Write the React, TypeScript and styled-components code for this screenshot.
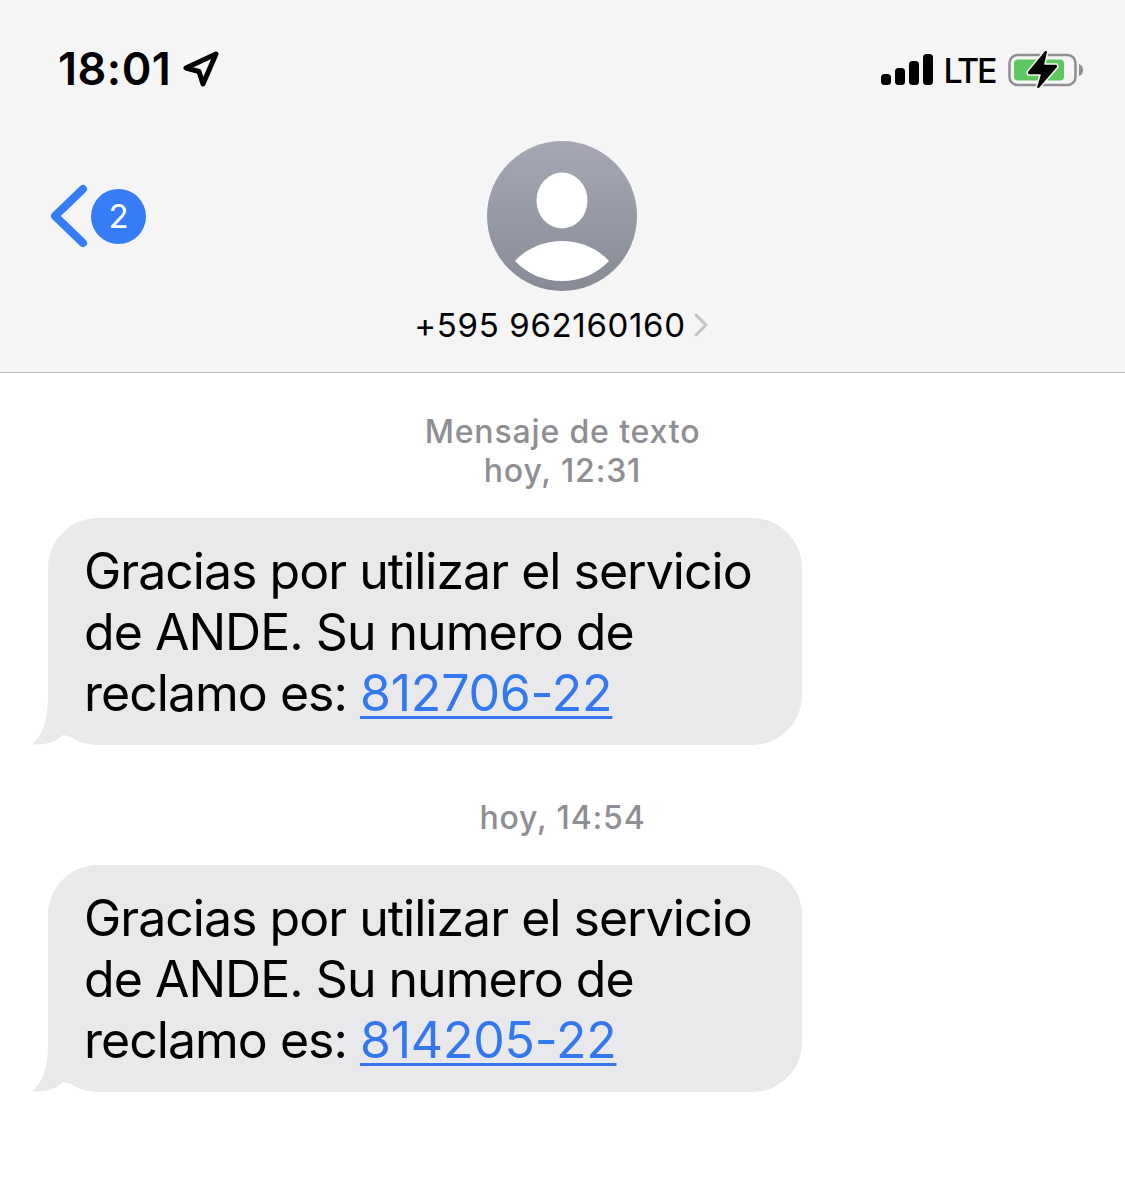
import React from 'react';
import styled, { createGlobalStyle } from 'styled-components';

const GlobalStyle = createGlobalStyle`
  html, body {
    margin: 0;
    padding: 0;
    background: #ffffff;
    font-family: Inter, "Liberation Sans", sans-serif;
  }
`;

const Page = styled.div`
  width: 1125px;
  height: 1191px;
  overflow: hidden;
  background: #ffffff;
`;

const Header = styled.header`
  height: 372px;
  background: #f5f5f6;
  border-bottom: 1px solid #b8b8ba;
  padding: 0 41px 0 48px;
`;

const StatusBar = styled.div`
  height: 141px;
  padding-top: 44px;
  box-sizing: border-box;
  display: flex;
  justify-content: space-between;
  align-items: flex-start;
`;

const TimeGroup = styled.div`
  display: flex;
  align-items: center;
  gap: 12px;
  padding-left: 10px;
`;

const Time = styled.span`
  font-size: 45px;
  line-height: 50px;
  font-weight: 600;
  letter-spacing: 0.5px;
  color: #000;
`;

const StatusIcons = styled.div`
  display: flex;
  align-items: center;
  margin-top: 3px;
`;

const Lte = styled.span`
  font-size: 34px;
  line-height: 44px;
  font-weight: 500;
  letter-spacing: -2.4px;
  color: #000;
  margin: 2px 13px 0 10px;
`;

const Nav = styled.div`
  display: grid;
  grid-template-columns: 1fr auto 1fr;
  margin-right: 7px;
`;

const Back = styled.div`
  display: flex;
  align-items: center;
  align-self: start;
  height: 150px;
  padding-left: 2px;
  gap: 3px;
`;

const Badge = styled.span`
  width: 55px;
  height: 55px;
  border-radius: 50%;
  background: #357cf6;
  color: #fff;
  font-size: 33px;
  font-weight: 400;
  display: flex;
  align-items: center;
  justify-content: center;
`;

const Contact = styled.div`
  display: flex;
  flex-direction: column;
  align-items: center;
`;

const Avatar = styled.svg`
  display: block;
  width: 150px;
  height: 150px;
`;

const NameRow = styled.div`
  display: flex;
  align-items: center;
  gap: 8px;
  margin-top: 14px;
  height: 40px;
  padding-right: 3px;
`;

const Phone = styled.span`
  font-size: 33px;
  line-height: 40px;
  color: #000;
  letter-spacing: 0.65px;
`;

const Thread = styled.main`
  padding: 39px 0 0 48px;
`;

const Stamp = styled.div<{ $gap: number }>`
  width: 1029px;
  text-align: center;
  font-size: 32px;
  line-height: 39px;
  font-weight: 500;
  color: #8e8e93;
  margin-top: ${(p) => p.$gap}px;
  margin-bottom: 28px;
  letter-spacing: 0.85px;
`;

const Bubble = styled.div`
  position: relative;
  width: 754px;
  height: 227px;
  box-sizing: border-box;
  padding: 23px 0 0 36px;
  background: #e9e9eb;
  border-radius: 50px;
  font-size: 50px;
  line-height: 61px;
  color: #000;
  letter-spacing: -0.98px;
`;

const Tail = styled.svg`
  position: absolute;
  left: -16px;
  bottom: 0;
  width: 40px;
  height: 48px;
`;

const NumberLink = styled.a`
  color: #3478f0;
  letter-spacing: -0.2px;
  text-decoration: underline;
  text-decoration-thickness: 3px;
  text-underline-offset: 5px;
`;

function LocationArrow() {
  return (
    <svg width="36" height="36" viewBox="0 0 36 36" fill="none">
      <path
        d="M33 3 L3 17 L16 20.5 L20 33 Z"
        stroke="#000"
        strokeWidth="5"
        strokeLinejoin="round"
      />
    </svg>
  );
}

function Signal() {
  return (
    <svg width="52" height="32" viewBox="0 0 52 32">
      <rect x="0" y="20" width="10" height="11" rx="3.5" fill="#000" />
      <rect x="14" y="14" width="10" height="17" rx="3.5" fill="#000" />
      <rect x="28" y="7" width="10" height="24" rx="3.5" fill="#000" />
      <rect x="42" y="0" width="10" height="31" rx="3.5" fill="#000" />
    </svg>
  );
}

function Battery() {
  return (
    <svg width="76" height="40" viewBox="0 0 76 40">
      <rect x="1.5" y="5" width="66" height="30" rx="8" fill="none" stroke="#8f8f91" strokeWidth="2.5" />
      <rect x="6" y="9.5" width="50" height="21" rx="4" fill="#5fc75f" />
      <path d="M71 14 C74 15 75 17 75 20 C75 23 74 25 71 26 Z" fill="#8f8f91" />
      <path
        d="M37 0 L40 1 L37 14 L49 14 L50 17 L31 39 L28 38 L32 25 L20 25 L19 22 Z"
        fill="#000"
        stroke="#f5f5f6"
        strokeWidth="1.5"
        strokeLinejoin="round"
      />
    </svg>
  );
}

function BackChevron() {
  return (
    <svg width="38" height="64" viewBox="0 0 38 64" fill="none">
      <path
        d="M33 5 L5 32 L33 59"
        stroke="#357cf6"
        strokeWidth="8"
        strokeLinecap="round"
        strokeLinejoin="round"
      />
    </svg>
  );
}

function DisclosureChevron() {
  return (
    <svg width="14" height="24" viewBox="0 0 14 24" fill="none">
      <path
        d="M2 2 L12 12 L2 22"
        stroke="#c4c4c6"
        strokeWidth="3"
        strokeLinecap="round"
        strokeLinejoin="round"
      />
    </svg>
  );
}

function ContactAvatar() {
  return (
    <Avatar viewBox="0 0 150 150">
      <defs>
        <linearGradient id="av" x1="0" y1="0" x2="0" y2="1">
          <stop offset="0" stopColor="#a6a9b5" />
          <stop offset="1" stopColor="#878b96" />
        </linearGradient>
      </defs>
      <circle cx="75" cy="75" r="75" fill="url(#av)" />
      <ellipse cx="75" cy="59.5" rx="25.5" ry="28" fill="#fff" />
      <path
        d="M28 120 C40 107 57 100 75 100 C93 100 110 107 122 120 C110 133 93 140 75 140 C57 140 40 133 28 120 Z"
        fill="#fff"
      />
    </Avatar>
  );
}

function SmsBubble({ code }: { code: string }) {
  return (
    <Bubble>
      <Tail viewBox="0 0 40 48">
        <path d="M16 0 C16 24 10 40 0 47 C12 49 24 45 31 38 L40 40 L40 0 Z" fill="#e9e9eb" />
      </Tail>
      Gracias por utilizar el servicio
      <br />
      de ANDE. Su numero de
      <br />
      reclamo es: <NumberLink>{code}</NumberLink>
    </Bubble>
  );
}

export default function App() {
  return (
    <Page>
      <GlobalStyle />
      <Header>
        <StatusBar>
          <TimeGroup>
            <Time>18:01</Time>
            <LocationArrow />
          </TimeGroup>
          <StatusIcons>
            <Signal />
            <Lte>LTE</Lte>
            <Battery />
          </StatusIcons>
        </StatusBar>
        <Nav>
          <Back>
            <BackChevron />
            <Badge>2</Badge>
          </Back>
          <Contact>
            <ContactAvatar />
            <NameRow>
              <Phone>+595 962160160</Phone>
              <DisclosureChevron />
            </NameRow>
          </Contact>
          <div />
        </Nav>
      </Header>
      <Thread>
        <Stamp $gap={0}>
          Mensaje de texto
          <br />
          hoy, 12:31
        </Stamp>
        <SmsBubble code="812706-22" />
        <Stamp $gap={53}>hoy, 14:54</Stamp>
        <SmsBubble code="814205-22" />
      </Thread>
    </Page>
  );
}
